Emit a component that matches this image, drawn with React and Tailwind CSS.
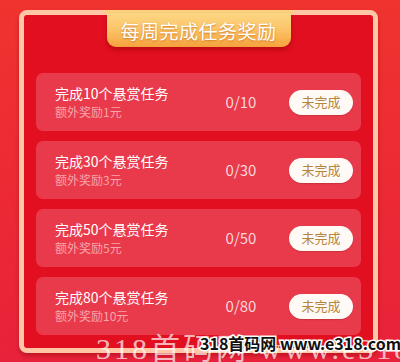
import React from "react";

const tasks = [
  { n: 10, r: 1 },
  { n: 30, r: 3 },
  { n: 50, r: 5 },
  { n: 80, r: 10 },
];

export default function App() {
  return (
    <div
      className="relative w-[400px] h-[362px] overflow-hidden bg-[linear-gradient(180deg,#f0332f_0%,#ec2a34_50%,#e8223a_100%)]"
      style={{ fontFamily: '"Noto Sans CJK SC", "Noto Sans", sans-serif' }}
    >
      <div className="ml-[19px] mt-[10px] w-[359px] h-[343px] rounded-[8px] border-[5px] border-[#ffc7a6] bg-[#e20f20] shadow-[0_3px_4px_rgba(120,0,0,0.35)] flex flex-col items-center">
        <div className="relative -mt-[5px] flex flex-col items-center">
          <div className="w-[190px] h-[3px] bg-[#fbd17e] rounded-t-[2px]" />
          <div className="w-[184px] h-[34px] rounded-b-[9px] bg-[linear-gradient(180deg,#fcd684_0%,#fbc66a_45%,#f6a23c_100%)] shadow-[0_3px_4px_rgba(140,0,0,0.45)] flex items-center justify-center">
            <span className="text-[19px] leading-none text-white tracking-[0.5px] [text-shadow:0_1px_2px_rgba(196,104,20,0.75)]">
              每周完成任务奖励
            </span>
          </div>
        </div>
        <div className="mt-[26px] w-[325px] flex flex-col gap-[10px]">
          {tasks.map((t) => (
            <div
              key={t.n}
              className="h-[58px] rounded-[7px] bg-[#e83a4b] flex items-center pl-[19px] pr-[8px]"
            >
              <div className="flex flex-col w-[156px]">
                <span className="text-[14px] leading-[17px] text-white">
                  完成{t.n}个悬赏任务
                </span>
                <span className="mt-[3px] text-[12px] leading-[14px] text-[#f7a4ac]">
                  额外奖励{t.r}元
                </span>
              </div>
              <div className="w-[60px] text-center text-[15px] text-[#fad6da]">
                0/{t.n}
              </div>
              <div className="ml-auto w-[64px] h-[25px] rounded-full bg-[#fffaf6] shadow-[0_1px_1px_rgba(150,40,40,0.35)] flex items-center justify-center text-[13px] text-[#b7843c]">
                未完成
              </div>
            </div>
          ))}
        </div>
      </div>
      <div
        className="absolute left-[96px] top-[334px] whitespace-nowrap text-[30px] leading-none tracking-[3px] text-white/70"
        style={{ fontFamily: '"Liberation Serif", "Noto Sans CJK SC", serif' }}
      >
        318首码网 www.e318.com
      </div>
      <div className="absolute left-[200px] top-[333px] whitespace-nowrap text-[16px] leading-[20px] font-bold text-[#111] [-webkit-text-stroke:3px_white] [paint-order:stroke_fill]">
        318首码网 www.e318.com
      </div>
    </div>
  );
}
